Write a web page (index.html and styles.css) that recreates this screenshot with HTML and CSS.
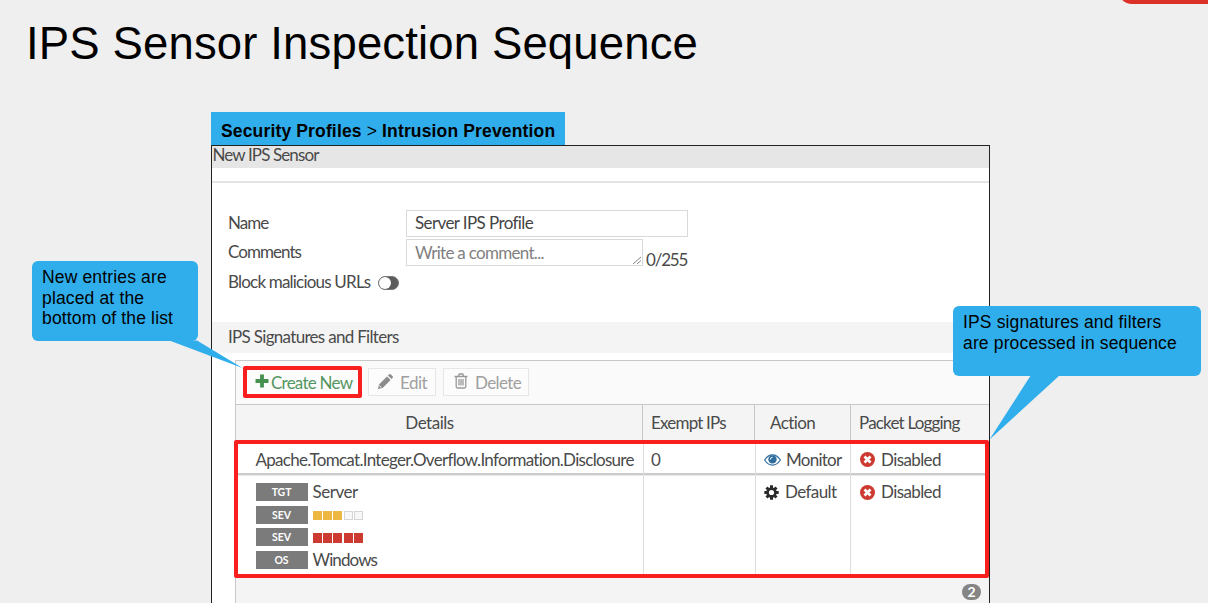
FILE: index.html
```html
<!DOCTYPE html>
<html lang="en">
<head>
<meta charset="utf-8">
<title>IPS Sensor Inspection Sequence</title>
<link rel="stylesheet" href="styles.css">
</head>
<body>
<svg width="0" height="0" class="defs" aria-hidden="true">
  <symbol id="times" viewBox="0 0 14 14"><circle cx="7" cy="7" r="7" fill="#cc3a31"/><path d="M4.200 4.200l5.600 5.600M9.800 4.200l-5.600 5.600" stroke="#fff" stroke-width="2.600"/></symbol>
</svg>
<main class="slide">
  <div class="corner"></div>
  <h1 class="title"><span>IPS Sensor Inspection Sequence</span></h1>
  <div class="shot">
    <div class="path"><b>Security Profiles</b> &gt; <b>Intrusion Prevention</b></div>
    <section class="panel">
      <div class="panel-title"><span class="t-new">New IPS Sensor</span></div>
      <div class="form">
        <label class="lbl"><span class="t-name">Name</span></label>
        <div class="field name"><span class="t-profile">Server IPS Profile</span></div>
        <label class="lbl"><span class="t-comments">Comments</span></label>
        <div class="comment-line">
          <div class="field comment"><span class="t-write">Write a comment...</span>
            <svg class="grip" width="10" height="10" viewBox="0 0 10 10"><path d="M1 9l8-7M5 9l4-3.5" stroke="#888" fill="none"/></svg>
          </div>
          <span class="count t-count">0/255</span>
        </div>
        <div class="block"><span class="t-block">Block malicious URLs</span><span class="toggle"></span></div>
      </div>
      <div class="section"><span class="t-section">IPS Signatures and Filters</span></div>
      <div class="grid">
        <div class="toolbar">
          <div class="btn create"><svg width="14" height="14" viewBox="0 0 14 14"><path d="M7 .5v13M.5 7h13" stroke="#46914f" stroke-width="3.800"/></svg><span class="t-create">Create New</span></div>
          <div class="btn edit"><svg width="15" height="15" viewBox="0 0 15 15"><path fill="#8c8c8c" d="M0 15l1-4.600L9 2.400l3.600 3.600-8 8zM9.900 1.500l1-1q1-.9 2 0l1.600 1.600q.9 1 0 2l-1 1z"/><path d="M1.200 11.500l2.300 2.300" stroke="#fafafa"/></svg><span class="t-edit">Edit</span></div>
          <div class="btn delete"><svg width="14" height="16" viewBox="0 0 14 16"><path d="M.5 3.500h13M4.500 3l.7-2h3.600l.7 2M2.200 3.500v10q0 1.500 1.300 1.500h7q1.300 0 1.300-1.500v-10M5 6v6.500M7 6v6.500M9 6v6.500" fill="none" stroke="#999" stroke-width="1.300"/></svg><span class="t-delete">Delete</span></div>
        </div>
        <div class="row head">
          <div class="c1"><span class="t-details">Details</span></div>
          <div><span class="t-exempt">Exempt IPs</span></div>
          <div class="c3"><span class="t-action">Action</span></div>
          <div><span class="t-packet">Packet Logging</span></div>
        </div>
        <div class="row first">
          <div class="c1"><span class="t-apache">Apache.Tomcat.Integer.Overflow.Information.Disclosure</span></div>
          <div class="zero">0</div>
          <div class="ic"><svg width="17" height="12" viewBox="0 0 17 12"><path d="M.6 6Q4 .9 8.500 .9T16.400 6Q13 11.100 8.500 11.100T.6 6z" fill="#fff" stroke="#2f6d9f" stroke-width="1.200"/><circle cx="8.500" cy="5.400" r="4.200" fill="#2f6d9f"/><path d="M6.300 5.500q0-2.200 2.200-2.200" stroke="#fff" fill="none"/></svg><span class="t-monitor">Monitor</span></div>
          <div class="ic log"><svg width="15" height="15"><use href="#times"/></svg><span class="t-disabled">Disabled</span></div>
        </div>
        <div class="row second">
          <div class="c1">
            <div class="filter"><span class="tag">TGT</span><span class="t-server">Server</span></div>
            <div class="filter"><span class="tag">SEV</span><span class="sev medium"><i></i><i></i><i></i><i class="off"></i><i class="off"></i></span></div>
            <div class="filter"><span class="tag">SEV</span><span class="sev critical"><i></i><i></i><i></i><i></i><i></i></span></div>
            <div class="filter"><span class="tag">OS</span><span class="t-windows">Windows</span></div>
          </div>
          <div></div>
          <div class="ic gear"><svg width="15" height="15" viewBox="-7.500 -7.500 15 15"><g stroke="#2b2b2b" stroke-width="3"><path d="M0-7.200V-4M0 7.200V4M-7.200 0H-4M7.200 0H4M-5-5l2.200 2.200M5 5L2.800 2.800M5-5L2.800-2.800M-5 5l2.200-2.200"/></g><circle r="3.900" fill="#fff" stroke="#2b2b2b" stroke-width="2.600"/></svg><span class="t-default">Default</span></div>
          <div class="ic log"><svg width="15" height="15"><use href="#times"/></svg><span class="t-disabled">Disabled</span></div>
        </div>
        <div class="foot"><span class="badge">2</span></div>
      </div>
    </section>
  </div>
  <div class="mark mark-rows"></div>
  <div class="mark mark-create"></div>
  <svg class="tails" width="1208" height="603" viewBox="0 0 1208 603"><path fill="#30aeec" d="M168 340L197 340.500L242.500 368zM1031 375H1060L989.500 439.500z"/></svg>
  <div class="note note-left"><span>New entries are</span><br><span>placed at the</span><br><span>bottom of the list</span></div>
  <div class="note note-right"><span>IPS signatures and filters</span><br><span>are processed in sequence</span></div>
</main>
</body>
</html>
```
FILE: styles.css
```css
* { box-sizing: border-box; }
body { margin: 0; background: #efefef; }
.defs { position: absolute; }
svg { flex: none; display: block; }
.slide { position: relative; width: 1208px; height: 603px; overflow: hidden; font-family: "Liberation Sans", Arial, sans-serif; color: #000; }
.corner { position: absolute; left: 1118px; top: -40px; width: 120px; height: 44px; border-radius: 14px; background: #dc3128; }
.title { margin: 0; padding: 17px 0 0 26px; height: 112px; font-size: 45.500px; line-height: 54px; font-weight: 400; white-space: nowrap; letter-spacing: .14px; }
.shot { width: 779px; margin-left: 211px; }
.path { width: 354px; height: 33px; padding: 1px 0 0 10px; line-height: 37px; font-size: 17.500px; background: #30aeec; white-space: nowrap; letter-spacing: .15px; }
.panel { height: 460px; border: 1px solid #222; background: #fff; overflow: hidden; font-family: Lato, sans-serif; font-size: 17px; letter-spacing: -.6px; color: #4a4a4a; white-space: nowrap; }
.t-new { letter-spacing: -.88px; }
.t-name { letter-spacing: -.95px; }
.t-comments { letter-spacing: -.95px; }
.t-write { letter-spacing: -.7px; }
.t-count { letter-spacing: -1.200px; }
.t-block { letter-spacing: -.8px; }
.t-section { letter-spacing: -.69px; }
.t-create { letter-spacing: -.75px; }
.t-edit, .t-details, .t-server { letter-spacing: -.48px; }
.t-exempt { letter-spacing: -.8px; }
.t-packet { letter-spacing: -.8px; }
.t-apache { letter-spacing: -.7px; }
.t-monitor { letter-spacing: -.75px; }
.t-windows { letter-spacing: -.9px; }
.panel-title { height: 22px; background: #e6e6e6; line-height: 18px; padding-left: .500px; }
.form { margin-top: 13px; border-top: 2px solid #e4e4e4; height: 141px; padding: 27px 0 0 16px; display: grid; grid-template-columns: 178px auto; grid-template-rows: 27px 27px 27px; row-gap: 2px; align-content: start; }
.lbl { line-height: 25px; }
.field { border: 1px solid #d9d9d9; height: 27px; line-height: 24px; padding-left: 8px; color: #444; }
.name { width: 282px; }
.comment-line { display: flex; gap: 3px; }
.comment { width: 237px; position: relative; color: #808080; line-height: 26px; }
.grip { position: absolute; right: 0; bottom: 0; }
.count { line-height: 41px; height: 27px; }
.block { grid-column: 1 / 3; display: flex; align-items: center; gap: 8px; line-height: 25px; height: 26px; }
.toggle { width: 21px; height: 14px; margin-top: 3px; border-radius: 7px; background: #5c5c5c; border: 1px solid #777; }
.toggle::before { content: ""; display: block; width: 12px; height: 12px; border-radius: 50%; background: #fff; }
.section { height: 31px; padding-left: 16px; background: #f4f4f4; line-height: 30px; }
.grid { margin: 7px 0 0 23px; border-left: 1px solid #c8c8c8; border-top: 1px solid #c8c8c8; }
.toolbar { height: 43px; background: #fafafa; padding: 7px 0 0 8px; display: flex; gap: 7px; }
.btn { height: 28px; border: 1px solid #e6e6e6; display: flex; align-items: center; color: #a0a0a0; background: #fcfcfc; line-height: 27px; }
.btn svg { margin-bottom: 2px; }
.create { width: 117px; padding-left: 10px; gap: 2px; color: #539661; }
.edit { width: 68px; padding-left: 9px; gap: 7px; }
.delete { width: 86px; padding-left: 10px; gap: 7px; }
.row { display: grid; grid-template-columns: 407px 112px 95px 1fr; }
.row > div { border-left: 1px solid #dedede; padding-left: 8px; }
.row > .c1 { border-left: 0; padding-left: 19.500px; }
.row > .zero { padding-left: 7px; }
.head { height: 38px; border-top: 1px solid #c8c8c8; background: #f4f4f4; line-height: 36px; grid-template-columns: 406px 112px 96px 1fr; }
.head > div { border-color: #c8c8c8; }
.head > .c1 { text-align: center; padding: 0 19px 0 0; }
.row > .c3 { padding-left: 15px; }
.first { height: 33px; border-bottom: 2px solid #ccc; line-height: 35px; }
.second { height: 102px; line-height: 34px; background: #fff; box-shadow: inset 0 1px #e8e8e8; }
.row > .ic { display: flex; gap: 5px; height: 100%; align-items: flex-start; }
.row > .log { gap: 6px; padding-left: 9px; }
.first .ic svg { margin-top: 12px; }
.first .log svg, .second .log svg { margin-top: 10px; }
.second .gear svg { margin-top: 10px; margin-right: 1px; }
.second > .c1 { padding-top: 8px; display: flex; flex-direction: column; gap: 4.500px; }
.filter { display: flex; height: 18px; align-items: center; gap: 5px; line-height: 18px; }
.tag { width: 52px; height: 18px; line-height: 19px; background: #7b7b7b; color: #fff; font-size: 10.500px; font-weight: 700; text-align: center; letter-spacing: -.1px; }
.sev { display: flex; gap: 1.200px; margin-top: 2px; }
.sev i { width: 9.200px; height: 9.500px; }
.medium i { background: #edb842; }
.medium .off { background: #f7f7f7; border: 1px solid #d5d5d5; }
.critical i { background: #cc3a31; }
.foot { height: 40px; background: #f4f4f4; display: flex; justify-content: flex-end; padding: 7px 8px 0 0; }
.badge { width: 19px; height: 16px; border-radius: 8px; background: #858585; color: #fff; font-size: 14px; line-height: 16px; font-weight: 700; text-align: center; letter-spacing: 0; }
.mark { position: absolute; border: 4px solid #f91f1f; border-radius: 2px; }
.mark-rows { left: 234px; top: 440px; width: 755px; height: 138px; }
.mark-create { left: 243px; top: 366px; width: 119px; height: 32px; }
.tails { position: absolute; left: 0; top: 0; }
.note { position: absolute; background: #30aeec; border-radius: 6px; font-size: 17.500px; line-height: 20.500px; letter-spacing: .15px; padding: 6px 0 0 10px; white-space: nowrap; }
.note-left { left: 32px; top: 261px; width: 166px; height: 80px; }
.note-right { left: 953px; top: 306px; width: 248px; height: 70px; }
```
